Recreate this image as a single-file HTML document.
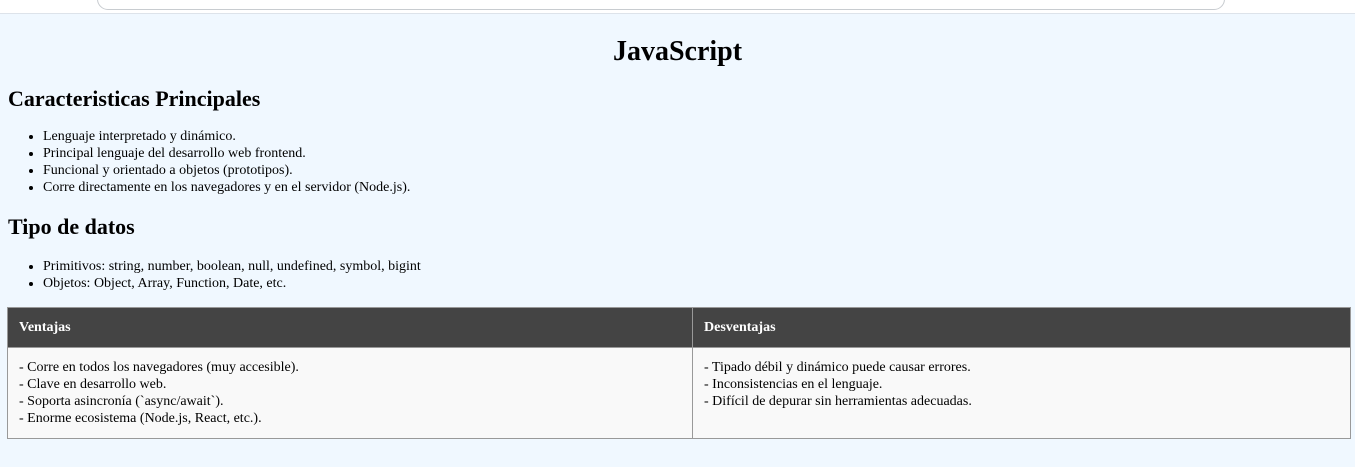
<!DOCTYPE html>
<html><head><meta charset="utf-8"><style>
*{margin:0;padding:0;box-sizing:border-box}
body{width:1355px;height:467px;overflow:hidden;background:#f0f8ff;font-family:"Liberation Serif",serif;color:#000;position:relative}
.chrome{position:absolute;left:0;top:0;width:1355px;height:14px;background:#fff;border-bottom:1px solid #dde3ea}
.url{position:absolute;left:97px;top:-12px;width:1128px;height:22px;border:1px solid #c8ccd0;border-radius:12px;background:#fff}
h1{position:absolute;top:36px;left:0;width:1355px;text-align:center;font-size:28px;font-weight:bold}
h2{position:absolute;left:8px;font-size:22px;font-weight:bold}
ul{position:absolute;left:43px;font-size:14px;line-height:17px;list-style:disc}
table{position:absolute;left:7px;top:307px;width:1344px;border-collapse:collapse;font-size:14px}
th,td{border:1px solid #999;text-align:left;vertical-align:top;padding:0 11px}
th{background:#444;color:#fff;height:40px;vertical-align:middle;font-weight:bold;padding-top:1px}
td{background:#f9f9f9;height:91px;padding-top:11px;line-height:17px}
</style></head><body>
<div class="chrome"><div class="url"></div></div>
<h1>JavaScript</h1>
<h2 style="top:86px">Caracteristicas Principales</h2>
<ul style="top:128px">
<li>Lenguaje interpretado y dinámico.</li>
<li>Principal lenguaje del desarrollo web frontend.</li>
<li>Funcional y orientado a objetos (prototipos).</li>
<li>Corre directamente en los navegadores y en el servidor (Node.js).</li>
</ul>
<h2 style="top:214px">Tipo de datos</h2>
<ul style="top:258px">
<li>Primitivos: string, number, boolean, null, undefined, symbol, bigint</li>
<li>Objetos: Object, Array, Function, Date, etc.</li>
</ul>
<table>
<tr><th style="width:685px">Ventajas</th><th>Desventajas</th></tr>
<tr><td>- Corre en todos los navegadores (muy accesible).<br>- Clave en desarrollo web.<br>- Soporta asincronía (`async/await`).<br>- Enorme ecosistema (Node.js, React, etc.).</td>
<td>- Tipado débil y dinámico puede causar errores.<br>- Inconsistencias en el lenguaje.<br>- Difícil de depurar sin herramientas adecuadas.</td></tr>
</table>
</body></html>
